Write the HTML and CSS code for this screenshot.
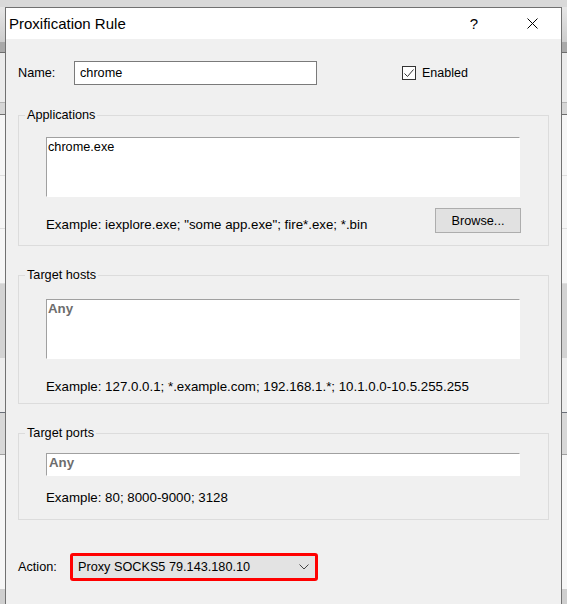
FILE: index.html
```html
<!DOCTYPE html>
<html lang="en">
<head>
  <meta charset="UTF-8" />
  <title>Proxification Rule</title>
  <link rel="stylesheet" href="styles.css">
</head>
<body>
  <div class="window">
    <div class="titlebar">
      <span class="title">Proxification Rule</span>
      <span class="caption-btn help">?</span>
      <span class="caption-btn close">
        <svg width="11" height="11" viewBox="0 0 11 11"><path d="M0.5 0.5L10.5 10.5M10.5 0.5L0.5 10.5" stroke="#000" stroke-width="1" fill="none"/></svg>
      </span>
    </div>

    <div class="content">
      <div class="name-row">
        <label class="row-label">Name:</label>
        <input type="text" class="name-box" value="chrome" />
        <span class="checkbox">
          <svg width="12" height="12" viewBox="0 0 12 12"><path d="M1.5 6.5L4.5 9.5L10.5 2.5" stroke="#333" stroke-width="1" fill="none"/></svg>
        </span>
        <span class="check-label">Enabled</span>
      </div>

      <div class="group group-apps">
        <div class="group-title">Applications</div>
        <textarea class="memo">chrome.exe</textarea>
        <div class="example-row">
          <span class="example">Example: iexplore.exe; "some app.exe"; fire*.exe; *.bin</span>
          <button type="button" class="button">Browse...</button>
        </div>
      </div>

      <div class="group group-hosts">
        <div class="group-title">Target hosts</div>
        <textarea class="memo" placeholder="Any"></textarea>
        <div class="example">Example: 127.0.0.1; *.example.com; 192.168.1.*; 10.1.0.0-10.5.255.255</div>
      </div>

      <div class="group group-ports">
        <div class="group-title">Target ports</div>
        <input type="text" class="port-box" placeholder="Any" />
        <div class="example">Example: 80; 8000-9000; 3128</div>
      </div>

      <div class="action-row">
        <label class="row-label action-label">Action:</label>
        <div class="combo">
          <span>Proxy SOCKS5 79.143.180.10</span>
          <svg width="10" height="6" viewBox="0 0 10 6"><path d="M0.5 0.5L5 5L9.5 0.5" stroke="#444" stroke-width="1" fill="none"/></svg>
        </div>
      </div>
    </div>
  </div>
</body>
</html>
```

FILE: styles.css
```css
html, body {
  margin: 0;
  height: 604px;
  overflow: hidden;
}

body {
  padding: 7px 0 0 5px;
  box-sizing: border-box;
  font-family: 'Liberation Sans', Arial, sans-serif;
  font-size: 12.7px;
  color: #000;
  background: linear-gradient(to bottom,
    #d9d9d9 0 7px,
    #e6e6e6 7px, #cdcdcd 42px,
    #a9a9a9 42px 52px,
    #6e6e6e 52px 53px,
    #ebebeb 53px 102px,
    #b5b5b5 102px 103px,
    #d6d6d6 103px 114px,
    #6e6e6e 114px 115px,
    #f6f6f6 115px 175px,
    #dedede 175px 176px,
    #f6f6f6 176px 228px,
    #dedede 228px 229px,
    #f6f6f6 229px 283px,
    #dedede 283px 284px,
    #d3d3d3 284px 358px,
    #ededed 358px 412px,
    #6a6f78 412px 413px,
    #d8d8d8 413px 454px,
    #a0a0a0 454px 455px,
    #f6f6f6 455px 589px,
    #cfcfcf 589px 604px);
}

.window {
  width: 557px;
  height: 620px;
  box-sizing: border-box;
  border: 1px solid #717171;
  background: #f0f0f0;
}

.titlebar {
  display: flex;
  align-items: center;
  height: 31px;
  background: #fff;
  padding-left: 3px;
}

.title {
  flex: 1;
  font-size: 15px;
  line-height: 20px;
}

.caption-btn {
  width: 46px;
  display: flex;
  justify-content: center;
  align-items: center;
  font-size: 15px;
}

.caption-btn.help {
  margin-right: 12px;
}

.caption-btn.close {
  margin-right: 6px;
}

.content {
  padding: 22px 0 0 12px;
}

.name-row, .action-row {
  display: flex;
  align-items: center;
}

.row-label {
  width: 56px;
  line-height: 16px;
}

.name-box {
  width: 243px;
  height: 24px;
  box-sizing: border-box;
  border: 1px solid #7a7a7a;
  padding: 0 5px;
  margin: 0;
  font: inherit;
  background: #fff;
}

.checkbox {
  width: 14px;
  height: 14px;
  box-sizing: border-box;
  border: 1px solid #333;
  background: #fff;
  margin-left: 85px;
  display: flex;
  align-items: center;
  justify-content: center;
}

.check-label {
  margin-left: 6px;
  font-size: 12.5px;
}

.group {
  width: 531px;
  box-sizing: border-box;
  border: 1px solid #dcdcdc;
  padding: 0 27px;
}

.group-title {
  width: fit-content;
  margin: -9px 0 0 -21px;
  padding: 0 2px;
  line-height: 16px;
  background: #f0f0f0;
}

.group-apps {
  margin-top: 30px;
  padding-bottom: 12px;
}

.group-hosts {
  margin-top: 29px;
  padding-bottom: 8px;
}

.group-ports {
  margin-top: 29px;
  padding-bottom: 13px;
}

.memo, .port-box {
  display: block;
  width: 474px;
  box-sizing: border-box;
  margin: 0;
  border: 1px solid #fff;
  border-top-color: #a0a0a0;
  border-left-color: #a0a0a0;
  background: #fff;
  font: inherit;
  line-height: 16px;
  resize: none;
  overflow: hidden;
}

.memo {
  height: 60px;
  padding: 1px 1px;
}

.group-apps .memo {
  margin-top: 14px;
}

.group-hosts .memo {
  margin-top: 16px;
}

.port-box {
  height: 23px;
  margin-top: 12px;
  padding: 1px 2px 4px;
}

.memo::placeholder, .port-box::placeholder {
  color: #6d6d6d;
  font-weight: bold;
  font-size: 13.3px;
  opacity: 1;
}

.example-row {
  display: flex;
  justify-content: space-between;
  align-items: flex-end;
  margin-top: 11px;
}

.example {
  font-size: 13.3px;
  line-height: 16px;
}

.group-hosts .example {
  margin-top: 20px;
}

.group-ports .example {
  margin-top: 14px;
}

.button {
  width: 86px;
  height: 25px;
  margin: 0;
  padding: 0;
  border: 1px solid #adadad;
  background: #e1e1e1;
  font: inherit;
  color: #000;
}

.action-row {
  margin-top: 33px;
}

.action-label {
  width: 52px;
}

.combo {
  width: 248px;
  height: 28px;
  box-sizing: border-box;
  border: 3px solid #ff0000;
  border-radius: 3px;
  background: #e3e3e3;
  display: flex;
  align-items: center;
  justify-content: space-between;
  padding: 0 6px 0 5px;
}
```
